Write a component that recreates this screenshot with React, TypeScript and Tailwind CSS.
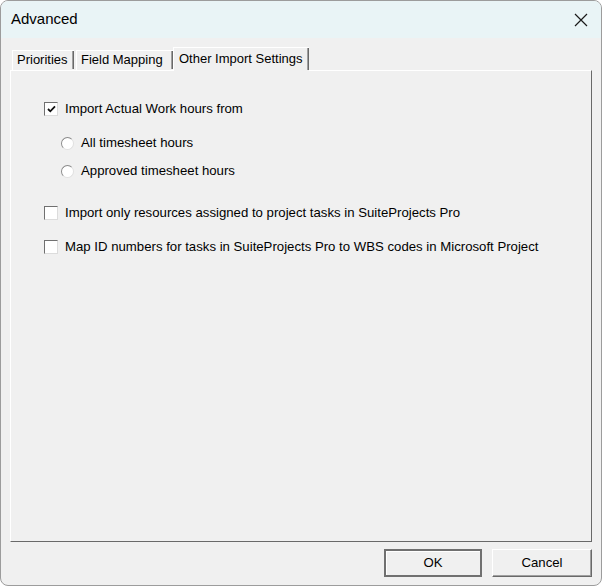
import React from 'react';

const font = { fontFamily: '"Liberation Sans", Arial, sans-serif' };

function CheckBox({ checked, label }: { checked?: boolean; label: string }) {
  return (
    <div className="flex h-[14px] items-center">
      <span className="flex h-[14px] w-[14px] items-center justify-center border border-t-[#707070] border-l-[#707070] border-r-[#dcdcdc] border-b-[#dcdcdc] bg-white">
        {checked ? (
          <svg width="9" height="8" viewBox="0 0 9 8">
            <path d="M1 4 L3.3 6.3 L8 1.3" fill="none" stroke="#111" strokeWidth="1.8" />
          </svg>
        ) : null}
      </span>
      <span className="ml-[7px] text-[13.2px] text-[#000]">{label}</span>
    </div>
  );
}

function Radio({ label }: { label: string }) {
  return (
    <div className="flex h-[14px] items-center">
      <span className="h-[13px] w-[13px] rounded-full border border-t-[#8a8a8a] border-l-[#8a8a8a] border-r-[#e0e0e0] border-b-[#e0e0e0] bg-white" />
      <span className="ml-[7px] text-[13.2px] text-[#000]">{label}</span>
    </div>
  );
}

export default function App() {
  return (
    <div
      className="flex h-[586px] w-[602px] flex-col overflow-hidden rounded-[8px] border border-[#9c9c9c] bg-[#f0f0f0]"
      style={font}
    >
      <div className="flex h-[37px] shrink-0 items-center justify-between bg-[#e9f4f6] pl-[10px] pr-[13px]">
        <span className="text-[15px] text-[#000]">Advanced</span>
        <svg width="14" height="14" viewBox="0 0 14 14">
          <path d="M1 1 L13 13 M13 1 L1 13" stroke="#1a1a1a" strokeWidth="1.2" />
        </svg>
      </div>

      <div className="flex flex-1 flex-col px-[9px]">
        <div className="mt-[10px] flex h-[22px] items-end pl-[2px]">
          <div className="flex h-[20px] w-[62px] items-center border-l border-t border-l-white border-t-white pb-[1px] pl-[4px] text-[13px]">
            Priorities
            <span className="ml-auto h-full w-[2px] border-l border-r border-l-[#a0a0a0] border-r-[#696969]" />
          </div>
          <div className="ml-[2px] flex h-[20px] w-[97px] items-center border-l border-t border-l-white border-t-white pb-[1px] pl-[4px] text-[13px]">
            Field Mapping
            <span className="ml-auto h-full w-[2px] border-l border-r border-l-[#a0a0a0] border-r-[#696969]" />
          </div>
          <div className="relative z-10 -mb-[1px] flex h-[24px] w-[136px] items-start border-l border-t border-l-white border-t-white bg-[#f0f0f0] pl-[5px] pt-[1px] text-[13px]">
            Other Import Settings
            <span className="ml-auto h-full w-[2px] -mt-[1px] border-l border-r border-l-[#a0a0a0] border-r-[#696969]" />
          </div>
        </div>

        <div className="flex h-[472px] flex-col border border-l-white border-t-white border-r-[#696969] border-b-[#696969] pl-[33px] pt-[31px]">
          <CheckBox checked label="Import Actual Work hours from" />
          <div className="mt-[20px] pl-[17px]">
            <Radio label="All timesheet hours" />
          </div>
          <div className="mt-[14px] pl-[17px]">
            <Radio label="Approved timesheet hours" />
          </div>
          <div className="mt-[28px]">
            <CheckBox label="Import only resources assigned to project tasks in SuiteProjects Pro" />
          </div>
          <div className="mt-[20px]">
            <CheckBox label="Map ID numbers for tasks in SuiteProjects Pro to WBS codes in Microsoft Project" />
          </div>
        </div>

        <div className="mt-[7px] flex justify-end gap-[10px] pr-[0px]">
          <button className="h-[28px] w-[98px] border-2 border-[#707070] bg-[#f0f0f0] text-[13.2px] text-[#000] shadow-[inset_1px_1px_0_#ffffff]">
            OK
          </button>
          <button className="h-[28px] w-[100px] border border-l-white border-t-white border-r-[#696969] border-b-[#696969] bg-[#f0f0f0] text-[13.2px] text-[#000] shadow-[inset_-1px_-1px_0_#a0a0a0]">
            Cancel
          </button>
        </div>
      </div>
    </div>
  );
}
